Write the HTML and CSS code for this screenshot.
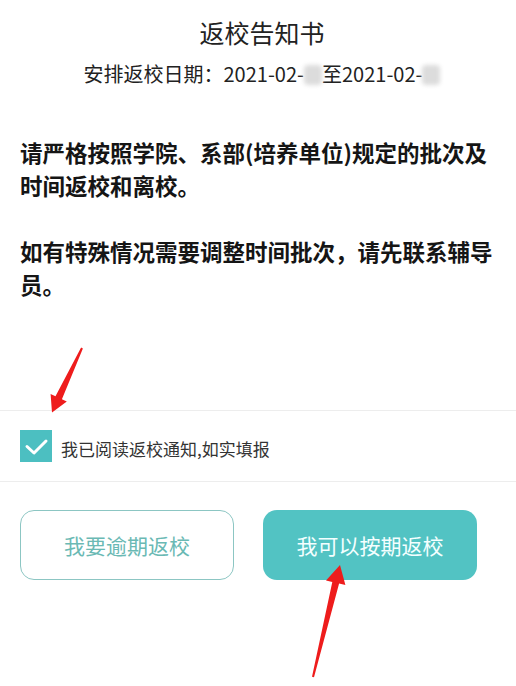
FILE: index.html
```html
<!DOCTYPE html>
<html lang="zh-CN">
<head>
<meta charset="utf-8">
<title>返校告知书</title>
<link rel="stylesheet" href="styles.css">
</head>
<body>
<div class="page">
  <header class="head">
    <h1 class="title">返校告知书</h1>
    <p class="dates">安排返校日期：2021-02-<span class="blur"></span>至2021-02-<span class="blur"></span></p>
  </header>
  <div class="notice">
    <p>请严格按照学院、系部(培养单位)规定的批次及时间返校和离校。</p>
    <p>如有特殊情况需要调整时间批次，请先联系辅导员。</p>
  </div>
  <label class="agree">
    <span class="check">
      <svg width="32" height="32" viewBox="0 0 32 32"><polyline points="7,16.5 14,23 26,11" fill="none" stroke="#fff" stroke-width="3" stroke-linecap="round" stroke-linejoin="round"/></svg>
    </span>
    <span class="agree-text">我已阅读返校通知,如实填报</span>
  </label>
  <div class="actions">
    <button class="btn btn-outline">我要逾期返校</button>
    <button class="btn btn-fill">我可以按期返校</button>
  </div>
  <svg class="annot" width="516" height="686" viewBox="0 0 516 686">
    <polygon fill="#ee1c1c" points="81.1,347.6 82.9,348.4 61.9,399.3 66.8,401.6 52,412.5 50.6,394 55.5,396.3"/>
    <polygon fill="#ee1c1c" points="312,676.8 314,677.2 339.1,583.5 345.4,585 340,565 326,580.4 332.3,581.9"/>
  </svg>
</div>
</body>
</html>
```
FILE: styles.css
```css
html, body {
  margin: 0;
  padding: 0;
  background: #fff;
}
.page {
  position: relative;
  width: 516px;
  height: 686px;
  overflow: hidden;
  font-family: "Noto Sans CJK SC", "Noto Sans", sans-serif;
  color: #222;
}
.head {
  padding: 16px 0 0 8px;
  text-align: center;
}
.title {
  margin: 0;
  font-size: 25px;
  line-height: 32px;
  font-weight: 400;
  color: #222;
}
.dates {
  margin: 12px 0 0;
  font-size: 20px;
  line-height: 28px;
  color: #222;
}
.blur {
  display: inline-block;
  width: 18px;
  height: 20px;
  vertical-align: -3px;
  background: #dcdcdc;
  border-radius: 4px;
  filter: blur(2px);
}
.notice {
  margin-top: 48px;
  padding: 0 11px 0 20px;
  font-size: 22.5px;
  line-height: 33px;
  font-weight: 700;
  color: #151515;
}
.notice p {
  margin: 0;
}
.notice p + p {
  margin-top: 33px;
}
.agree {
  margin-top: 109px;
  height: 70px;
  border-top: 1px solid #ededed;
  border-bottom: 1px solid #ededed;
  display: flex;
  align-items: center;
  padding-left: 20px;
  gap: 9px;
}
.check {
  width: 32px;
  height: 32px;
  background: #4cbfc1;
  display: flex;
}
.agree-text {
  font-size: 17px;
  color: #333;
  padding-top: 5px;
}
.actions {
  margin-top: 28px;
  padding-left: 20px;
  display: flex;
  gap: 29px;
}
.btn {
  width: 214px;
  height: 70px;
  border-radius: 14px;
  font-family: "Noto Sans CJK SC", "Noto Sans", sans-serif;
  font-size: 21px;
  box-sizing: border-box;
  padding: 0;
}
.btn-outline {
  background: #fff;
  border: 1.5px solid #8cc6c3;
  color: #6ab9b4;
}
.btn-fill {
  background: #52c3c3;
  border: none;
  color: #f4ffff;
}
.annot {
  position: absolute;
  left: 0;
  top: 0;
  pointer-events: none;
}
```
